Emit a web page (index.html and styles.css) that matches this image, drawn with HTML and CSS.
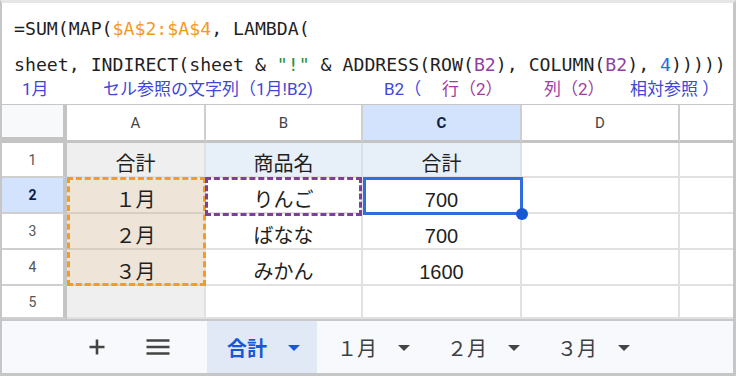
FILE: index.html
```html
<!DOCTYPE html>
<html lang="ja">
<head>
  <meta charset="UTF-8">
  <meta name="viewport" content="width=device-width, initial-scale=1.0">
  <title>INDIRECT と ADDRESS</title>
  <link rel="stylesheet" href="styles.css">
</head>
<body>

  <div class="frame">

    <div class="formula">
      <div class="code-line">=SUM(MAP(<span class="ref-orange">$A$2:$A$4</span>, LAMBDA(</div>
      <div class="code-line">sheet, INDIRECT(sheet &amp; <span class="str">"!"</span> &amp; ADDRESS(ROW(<span class="ref-purple">B2</span>), COLUMN(<span class="ref-purple">B2</span>), <span class="num">4</span>)))))</div>
      <div class="notes">
        <span>1月</span>
        <span>セル参照の文字列（1月!B2)</span>
        <span>B2（</span>
        <span class="purple">行（2）</span>
        <span class="purple">列（2）</span>
        <span>相対参照 ）</span>
      </div>
    </div>

    <div class="sheet">
      <!-- cabecera de columnas -->
      <div class="cell corner"></div>
      <div class="cell ch">A</div>
      <div class="cell ch">B</div>
      <div class="cell ch sel">C</div>
      <div class="cell ch">D</div>
      <div class="cell ch last"></div>

      <!-- fila 1 -->
      <div class="cell rh">1</div>
      <div class="cell gray">合計</div>
      <div class="cell blue">商品名</div>
      <div class="cell blue">合計</div>
      <div class="cell"></div>
      <div class="cell last"></div>

      <!-- fila 2 -->
      <div class="cell rh sel">2</div>
      <div class="cell peach has-range">１月<span class="range-orange"></span></div>
      <div class="cell has-range">りんご<span class="range-purple"></span></div>
      <div class="cell has-range">700<span class="range-blue"><span class="handle"></span></span></div>
      <div class="cell"></div>
      <div class="cell last"></div>

      <!-- fila 3 -->
      <div class="cell rh">3</div>
      <div class="cell peach">２月</div>
      <div class="cell">ばなな</div>
      <div class="cell">700</div>
      <div class="cell"></div>
      <div class="cell last"></div>

      <!-- fila 4 -->
      <div class="cell rh">4</div>
      <div class="cell peach">３月</div>
      <div class="cell">みかん</div>
      <div class="cell">1600</div>
      <div class="cell"></div>
      <div class="cell last"></div>

      <!-- fila 5 -->
      <div class="cell rh">5</div>
      <div class="cell gray"></div>
      <div class="cell"></div>
      <div class="cell"></div>
      <div class="cell"></div>
      <div class="cell last"></div>
    </div>

    <div class="tabbar">
      <div class="icon-btn">
        <svg width="16" height="16" viewBox="0 0 16 16">
          <path d="M8 0.5V15.5M0.5 8H15.5" stroke="#444" stroke-width="2.6" fill="none"/>
        </svg>
      </div>
      <div class="icon-btn menu-btn">
        <svg width="24" height="18" viewBox="0 0 24 18">
          <path d="M0.5 2.5H23.5M0.5 9H23.5M0.5 15.5H23.5" stroke="#444" stroke-width="2.6" fill="none"/>
        </svg>
      </div>
      <div class="tab active"><span>合計</span><i class="caret"></i></div>
      <div class="tab"><span>１月</span><i class="caret"></i></div>
      <div class="tab"><span>２月</span><i class="caret"></i></div>
      <div class="tab"><span>３月</span><i class="caret"></i></div>
    </div>

  </div>

</body>
</html>
```

FILE: styles.css
```css
* {
  margin: 0;
  padding: 0;
  box-sizing: border-box;
}

body {
  background-color: #ffffff;
  font-family: "Liberation Sans", "Noto Sans CJK JP", sans-serif;
}

.frame {
  width: 736px;
  height: 376px;
  border: 3px solid #c6c6c6;
  border-left-width: 2px;
  border-top-color: #e6e6e6;
  display: flex;
  flex-direction: column;
  background-color: #fff;
}

/* barra de fórmula */
.formula {
  height: 102px;
  border-bottom: 1px solid #c7c7c7;
  padding: 8px 0 0 12px;
  font-family: "DejaVu Sans Mono", monospace;
  font-size: 18.2px;
  color: #1f1f1f;
}

.code-line {
  height: 36px;
  line-height: 36px;
  white-space: pre;
}

.ref-orange { color: #f39a1e; }
.ref-purple { color: #8e3fa0; }
.str { color: #23913a; }
.num { color: #1a6ee0; }

.notes {
  display: grid;
  grid-template-columns: 81px 281px 58px 102px 86px auto;
  padding-left: 8px;
  margin-top: -4px;
  height: 20px;
  line-height: 20px;
  font-family: Roboto, "Noto Sans CJK JP", sans-serif;
  font-size: 17px;
  color: #4046d8;
  white-space: nowrap;
}

.notes .purple {
  color: #a03ca0;
}

/* hoja */
.sheet {
  flex: 1;
  display: grid;
  grid-template-columns: 65px 139px 157px 159px 158px 1fr;
  grid-template-rows: 38px 35px 36px 36px 36px 1fr;
  font-size: 20px;
  line-height: 24px;
  color: #1f1f1f;
}

.cell {
  border-right: 2px solid #e1e1e1;
  border-bottom: 2px solid #e1e1e1;
  display: flex;
  align-items: flex-end;
  justify-content: center;
}

.cell.last {
  border-right: none;
}

.corner {
  background-color: #f8f9fa;
  border-right: 4px solid #c4c4c4;
  border-bottom: 6px solid #c4c4c4;
}

.ch {
  align-items: center;
  border-right-color: #cfcfcf;
  border-bottom: 3px solid #c4c4c4;
  font-family: Roboto, sans-serif;
  font-size: 15px;
  color: #444;
}

.rh {
  align-items: center;
  border-right: 4px solid #c4c4c4;
  border-bottom-color: #cfcfcf;
  font-family: Roboto, sans-serif;
  font-size: 14px;
  color: #555;
}

.ch.sel, .rh.sel {
  background-color: #d3e3fd;
  font-weight: bold;
  color: #0b1f44;
}

.gray {
  background-color: #efefef;
}

.blue {
  background-color: #e7eff9;
  border-right-color: #d7e0ec;
}

.peach {
  background-color: #eee4d8;
  border-bottom-color: #d8cec2;
}

/* rangos resaltados */
.has-range {
  position: relative;
}

.range-orange,
.range-purple,
.range-blue {
  position: absolute;
  z-index: 2;
}

.range-orange {
  left: 0;
  top: -1px;
  right: -2px;
  bottom: -74px;
  border: 3px dashed #f59b23;
}

.range-purple {
  left: -1px;
  top: -1px;
  right: -1px;
  bottom: -4px;
  border: 3px dashed #7e3f98;
  z-index: 3;
}

.range-blue {
  left: 0;
  top: -1px;
  right: -3px;
  bottom: -3px;
  border: 3px solid #2f6ee0;
  z-index: 3;
}

.handle {
  position: absolute;
  right: -8px;
  bottom: -8px;
  width: 12px;
  height: 12px;
  border-radius: 50%;
  background-color: #1558d6;
}

/* pestañas */
.tabbar {
  height: 54px;
  border-top: 2px solid #c8c8c8;
  background-color: #f8f9fc;
  display: flex;
  padding-left: 71px;
  font-family: "Noto Sans CJK JP", sans-serif;
  font-size: 20px;
  color: #3c4043;
}

.icon-btn {
  width: 48px;
  display: flex;
  align-items: center;
  justify-content: center;
}

.menu-btn {
  margin: 0 25px 0 13px;
}

.tab {
  display: flex;
  align-items: center;
  gap: 21px;
  padding: 0 17px 0 20px;
}

.tab.active {
  background-color: #e1e9f7;
  color: #1a57d6;
  font-weight: bold;
}

.caret {
  width: 0;
  height: 0;
  border-left: 6px solid transparent;
  border-right: 6px solid transparent;
  border-top: 6px solid #444;
  margin-top: 2px;
}

.tab.active .caret {
  border-top-color: #1a57d6;
}
```
